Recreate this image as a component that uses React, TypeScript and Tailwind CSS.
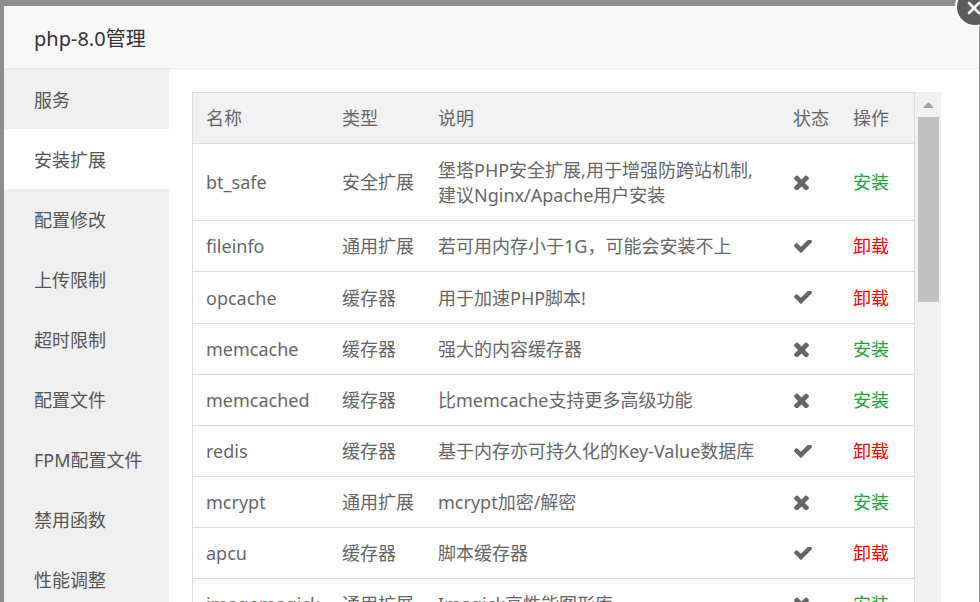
import React from "react";

type Row = {
  name: string;
  type: string;
  desc: string[];
  on: boolean;
  h: string;
};

const rows: Row[] = [
  { name: "bt_safe", type: "安全扩展", desc: ["堡塔PHP安全扩展,用于增强防跨站机制,", "建议Nginx/Apache用户安装"], on: false, h: "h-[77px]" },
  { name: "fileinfo", type: "通用扩展", desc: ["若可用内存小于1G，可能会安装不上"], on: true, h: "h-[51px]" },
  { name: "opcache", type: "缓存器", desc: ["用于加速PHP脚本!"], on: true, h: "h-[52px]" },
  { name: "memcache", type: "缓存器", desc: ["强大的内容缓存器"], on: false, h: "h-[51px]" },
  { name: "memcached", type: "缓存器", desc: ["比memcache支持更多高级功能"], on: false, h: "h-[51px]" },
  { name: "redis", type: "缓存器", desc: ["基于内存亦可持久化的Key-Value数据库"], on: true, h: "h-[51px]" },
  { name: "mcrypt", type: "通用扩展", desc: ["mcrypt加密/解密"], on: false, h: "h-[51px]" },
  { name: "apcu", type: "缓存器", desc: ["脚本缓存器"], on: true, h: "h-[51px]" },
  { name: "imagemagick", type: "通用扩展", desc: ["Imagick高性能图形库"], on: false, h: "h-[51px]" },
];

const menu = ["服务", "安装扩展", "配置修改", "上传限制", "超时限制", "配置文件", "FPM配置文件", "禁用函数", "性能调整"];

function TimesIcon() {
  return (
    <svg width="15" height="15" viewBox="110 330 1188 1188" fill="#666">
      <path d="M1298 1322q0 40-28 68l-136 136q-28 28-68 28t-68-28l-294-294-294 294q-28 28-68 28t-68-28l-136-136q-28-28-28-68t28-68l294-294-294-294q-28-28-28-68t28-68l136-136q28-28 68-28t68 28l294 294 294-294q28-28 68-28t68 28l136 136q28 28 28 68t-28 68l-294 294 294 294q28 28 28 68z" />
    </svg>
  );
}

function CheckIcon() {
  return (
    <svg width="18" height="14" viewBox="121 430 1550 1200" fill="#666">
      <path d="M1671 566q0 40-28 68l-724 724-136 136q-28 28-68 28t-68-28l-136-136-362-362q-28-28-28-68t28-68l136-136q28-28 68-28t68 28l294 295 656-657q28-28 68-28t68 28l136 136q28 28 28 68z" />
    </svg>
  );
}

const grid = "grid grid-cols-[136px_96px_355px_60px_1fr] items-center";

export default function App() {
  return (
    <div className="relative w-[980px] h-[602px] overflow-hidden bg-[#8e8e8e] pl-[4px] pt-[6px] font-['Noto_Sans','Noto_Sans_CJK_SC',sans-serif]">
      <div className="w-[975px] h-[596px] bg-white flex flex-col">
        <div className="h-[63px] shrink-0 bg-[#f8f8f8] border-b border-[#e8e8e8] flex items-center pl-[30px] pt-[3px] text-[20px] text-[#333]">
          php-8.0管理
        </div>
        <div className="flex flex-1 overflow-hidden">
          <div className="w-[165px] shrink-0 bg-[#f0f0f0] flex flex-col">
            {menu.map((m, i) => (
              <div
                key={m}
                className={
                  "h-[60px] shrink-0 flex items-center pl-[30px] pt-[2px] text-[18px] text-[#555] " +
                  (i === 1 ? "bg-white" : "")
                }
              >
                {m}
              </div>
            ))}
          </div>
          <div className="flex-1 pl-[23px] pt-[23px] flex items-start">
            <div className="w-[723px] border border-[#ddd] text-[18px] text-[#666]">
              <div className={grid + " h-[51px] pt-[1px] bg-[#f2f2f2] border-b border-[#ddd]"}>
                <div className="pl-[13px]">名称</div>
                <div className="pl-[13px]">类型</div>
                <div className="pl-[13px]">说明</div>
                <div className="pl-[13px]">状态</div>
                <div className="pl-[13px]">操作</div>
              </div>
              {rows.map((r) => (
                <div key={r.name} className={grid + " pt-[1px] border-b border-[#ddd] " + r.h}>
                  <div className="pl-[13px]">{r.name}</div>
                  <div className="pl-[13px]">{r.type}</div>
                  <div className="pl-[13px] leading-[25px]">
                    {r.desc.map((d) => (
                      <div key={d}>{d}</div>
                    ))}
                  </div>
                  <div className="pl-[14px] flex items-center">{r.on ? <CheckIcon /> : <TimesIcon />}</div>
                  <div className={"pl-[13px] " + (r.on ? "text-[#ff0000]" : "text-[#20a53a]")}>
                    {r.on ? "卸载" : "安装"}
                  </div>
                </div>
              ))}
            </div>
            <div className="w-[26px] self-stretch bg-[#f1f1f1] flex flex-col">
              <div className="h-[25px] flex items-center justify-center">
                <svg width="11" height="6" viewBox="0 0 11 6">
                  <polygon points="5.5,0 11,6 0,6" fill="#a3a3a3" />
                </svg>
              </div>
              <div className="ml-[3px] w-[21px] h-[185px] bg-[#c1c1c1]" />
            </div>
          </div>
        </div>
      </div>
      <div className="absolute left-[955px] top-[-13px] w-[40px] h-[40px] rounded-full bg-[#5c5c5c] border-2 border-white flex items-center justify-center">
        <svg width="14" height="14" viewBox="0 0 14 14" className="-ml-[2px] mt-[2px]">
          <path d="M2 2 L12 12 M12 2 L2 12" stroke="white" strokeWidth="2.5" strokeLinecap="round" />
        </svg>
      </div>
    </div>
  );
}
